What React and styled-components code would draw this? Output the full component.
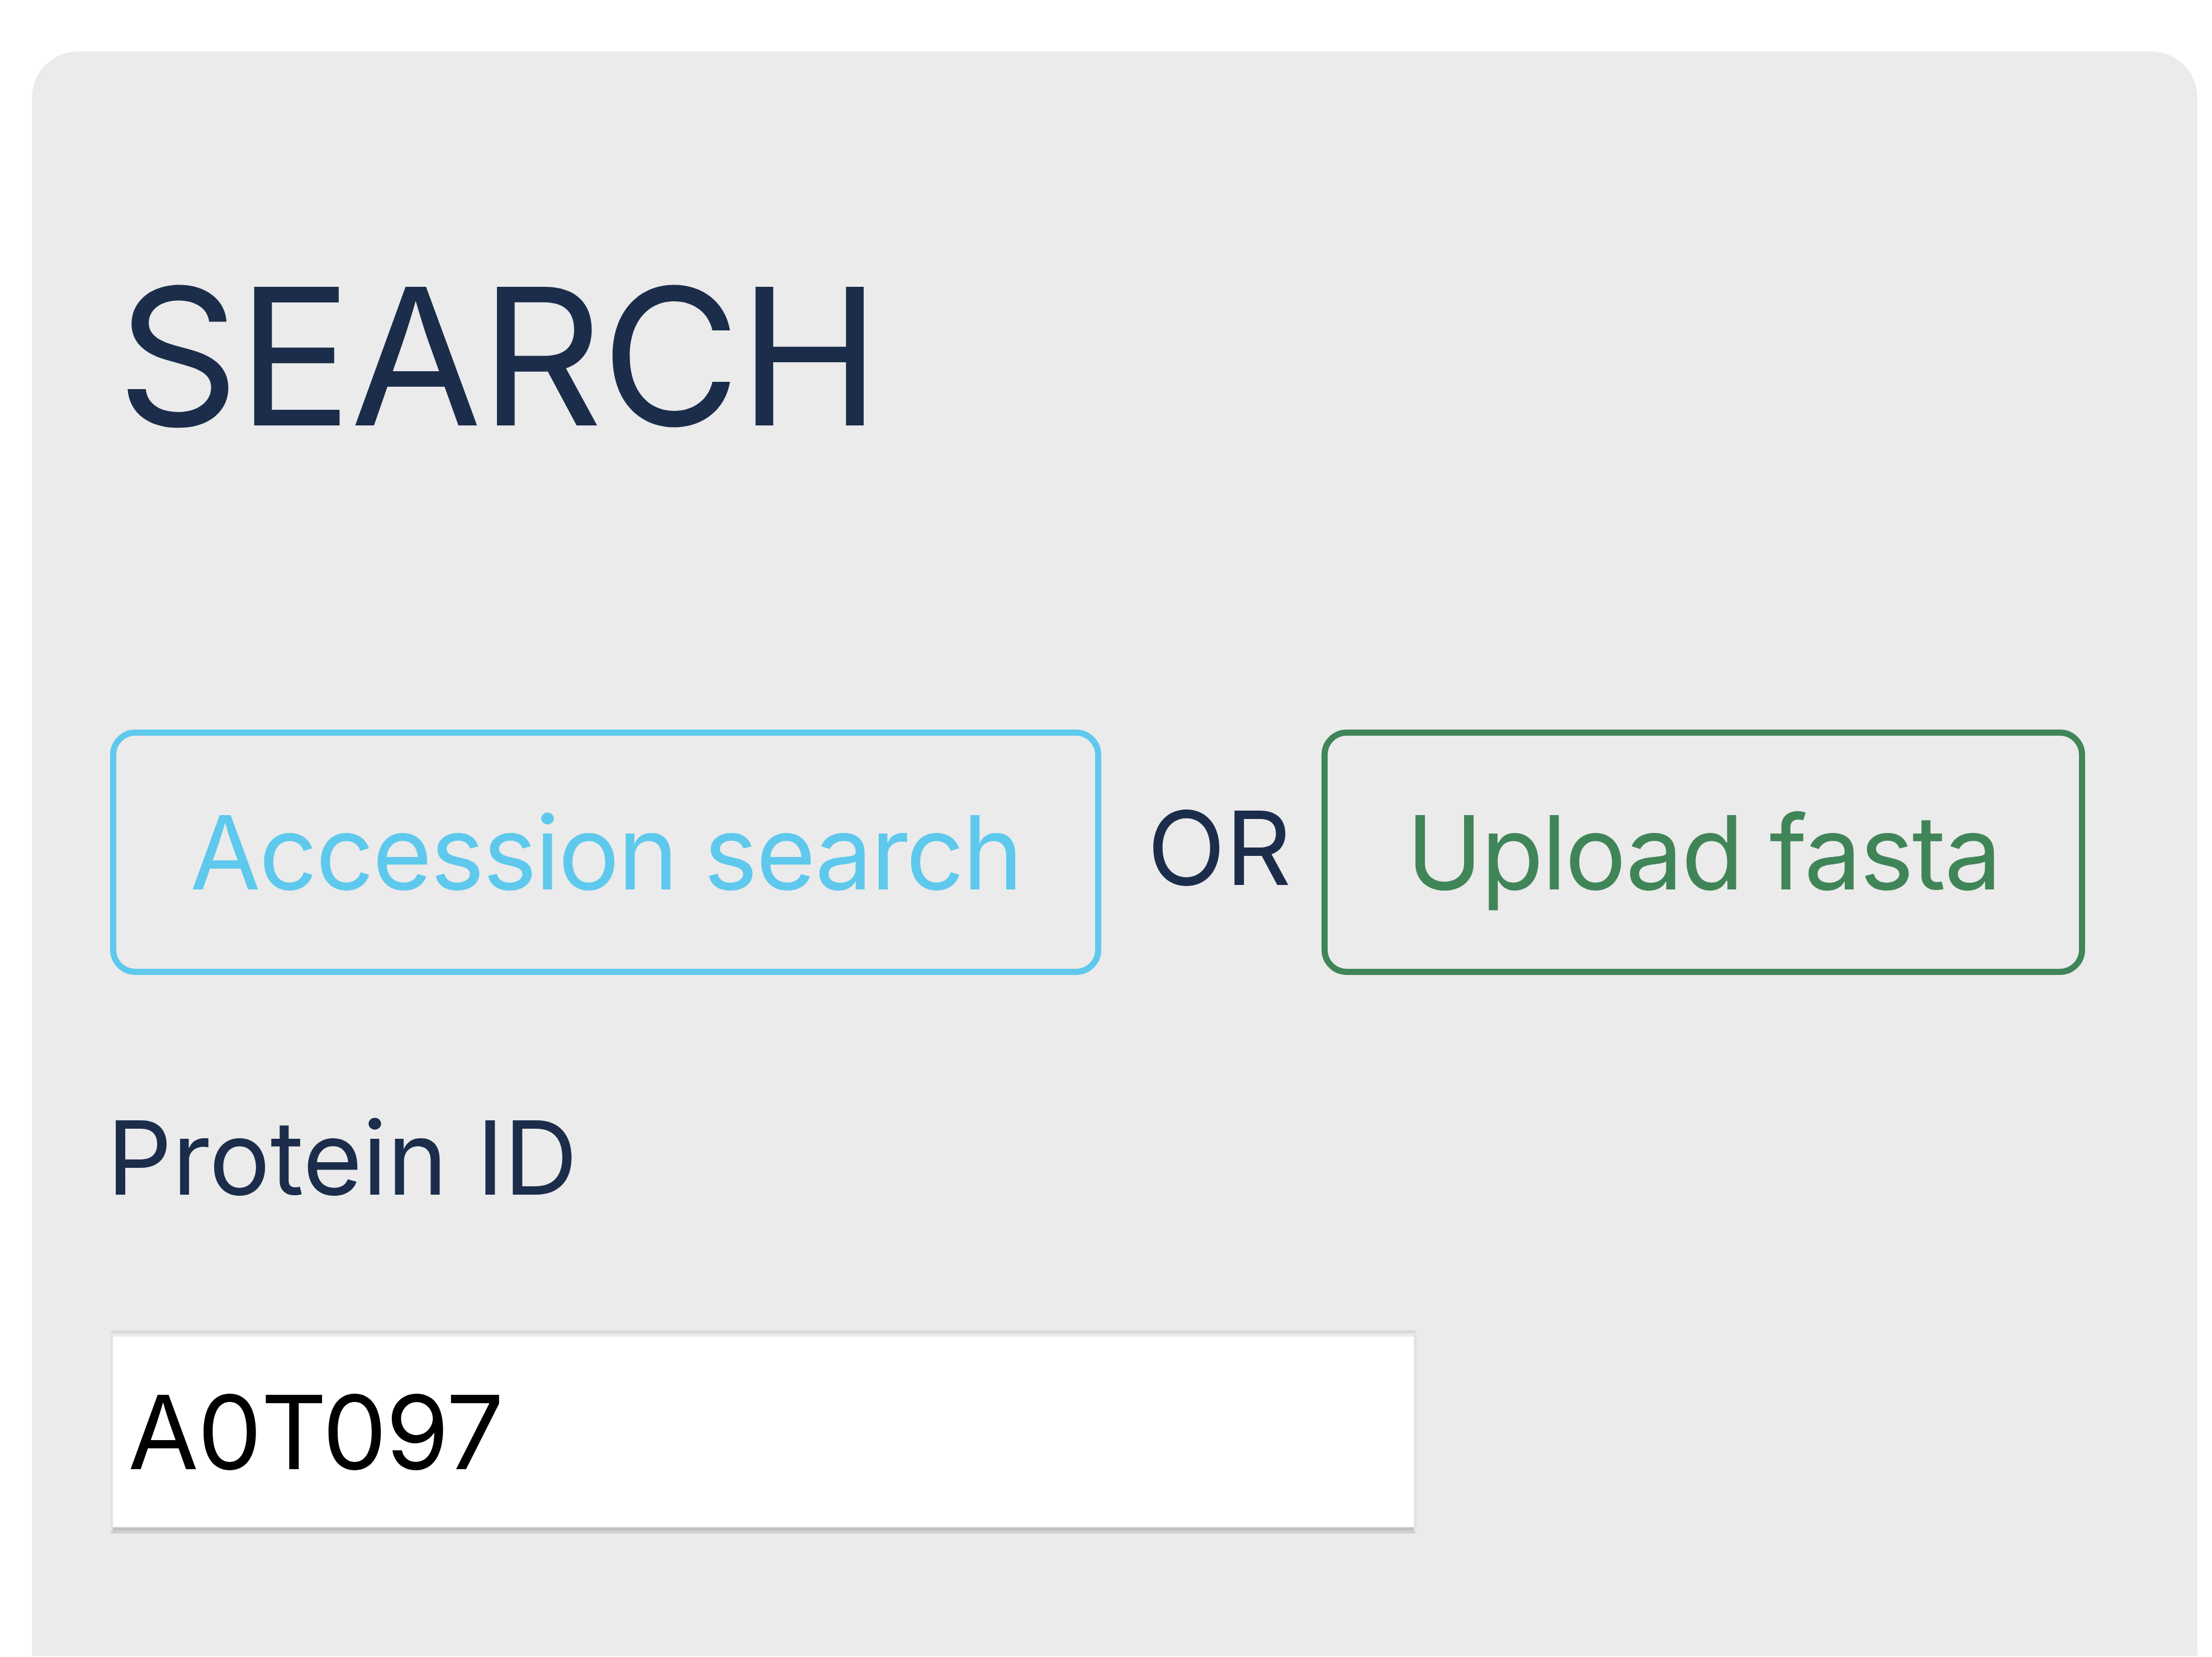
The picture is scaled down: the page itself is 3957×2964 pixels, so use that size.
import React from "react";
import styled, { createGlobalStyle } from "styled-components";

const GlobalStyle = createGlobalStyle`
  html,
  body {
    margin: 0;
    padding: 0;
    background: #fff;
  }
  body {
    font-family: Inter, "Liberation Sans", sans-serif;
  }
`;

const Page = styled.div`
  width: 3957px;
  height: 2964px;
  overflow: hidden;
  padding: 92px 26px 0 57px;
  box-sizing: border-box;
`;

const SearchPanel = styled.section`
  height: 2870px;
  background: #ebebeb;
  border-radius: 83px 83px 0 0;
  padding: 375px 0 0 140px;
  box-sizing: border-box;
  display: flex;
  flex-direction: column;
  align-items: flex-start;
`;

const PanelTitle = styled.h1`
  margin: 0 0 0 12px;
  font-size: 341px;
  line-height: 1;
  font-weight: 400;
  letter-spacing: -3px;
  color: #1b2d4b;
`;

const ModeRow = styled.div`
  display: flex;
  align-items: center;
  margin-top: 497px;
`;

const ModeButton = styled.button`
  height: 439px;
  padding: 0 ${(p) => p.$padX}px;
  box-sizing: border-box;
  background: transparent;
  border: 11px solid ${(p) => p.$color};
  border-radius: 45px;
  color: ${(p) => p.$color};
  font-family: Inter, "Liberation Sans", sans-serif;
  font-size: 183px;
  line-height: 1;
  letter-spacing: -3px;
  cursor: pointer;
`;

const OrText = styled.span`
  margin: 0 54px 0 82px;
  padding-bottom: 16px;
  font-size: 183px;
  line-height: 1;
  color: #1b2d4b;
`;

const FieldLabel = styled.label`
  margin: 235px 0 0 -6px;
  font-size: 183px;
  line-height: 1;
  color: #1b2d4b;
`;

const ProteinInput = styled.input`
  margin-top: 218px;
  width: 2337px;
  height: 363px;
  box-sizing: border-box;
  padding: 0 0 0 27px;
  background: #fff;
  border: none;
  border-top: 5px solid #d9d9d9;
  border-bottom: 5px solid #cfcfcf;
  border-left: 5px solid #e3e3e3;
  border-right: 5px solid #e3e3e3;
  box-shadow: inset 0 6px 0 #ebebeb, inset 0 -6px 0 #c1c1c1;
  font-family: Inter, "Liberation Sans", sans-serif;
  font-size: 183px;
  letter-spacing: -2px;
  color: #000;
  outline: none;
`;

export default function App() {
  return (
    <>
      <GlobalStyle />
      <Page>
        <SearchPanel>
          <PanelTitle>SEARCH</PanelTitle>
          <ModeRow>
            <ModeButton $color="#5ec9ed" $padX={132}>
              Accession search
            </ModeButton>
            <OrText>OR</OrText>
            <ModeButton $color="#408558" $padX={141}>
              Upload fasta
            </ModeButton>
          </ModeRow>
          <FieldLabel htmlFor="protein-id">Protein ID</FieldLabel>
          <ProteinInput id="protein-id" defaultValue="A0T097" />
        </SearchPanel>
      </Page>
    </>
  );
}
